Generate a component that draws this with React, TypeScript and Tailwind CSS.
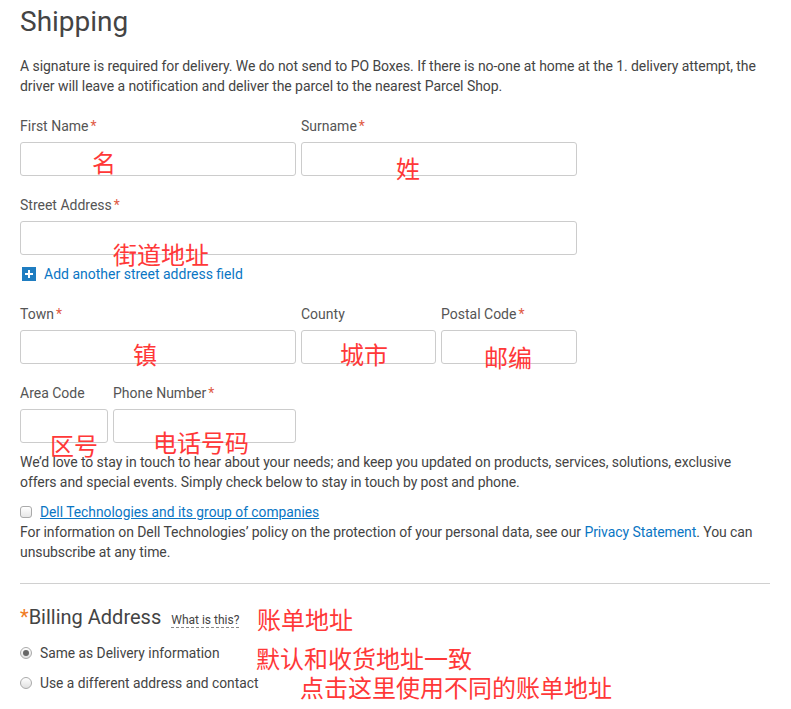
import React from "react";

const Req = () => <span className="text-[#e05a44] ml-[2px]">*</span>;

function Field({ label, req, w }: { label: string; req?: boolean; w: string }) {
  return (
    <div className={`flex flex-col ${w}`}>
      <div className="h-5 leading-5 text-[14px] text-[#555] whitespace-nowrap">
        {label}
        {req && <Req />}
      </div>
      <div className="mt-[6px] h-[34px] w-full rounded-[3px] border border-[#cccccc] bg-white" />
    </div>
  );
}

const Note = ({ x, y, children }: { x: number; y: number; children: React.ReactNode }) => (
  <div
    className="absolute whitespace-nowrap text-[24px] leading-none text-[#ff3838]"
    style={{ left: x, top: y, fontFamily: '"Noto Sans CJK SC", sans-serif' }}
  >
    {children}
  </div>
);

export default function App() {
  return (
    <div
      className="relative w-[791px] h-[709px] overflow-hidden bg-white text-[#444]"
      style={{ fontFamily: "Roboto, 'Noto Sans CJK SC', sans-serif" }}
    >
      <div className="px-5">
        <h1 className="text-[28px] leading-[35px] pt-[4px] text-[#444] font-normal">Shipping</h1>
        <p className="mt-[18px] text-[14px] leading-[19.5px] tracking-[-0.06px] text-[#444] w-[750px]">
          A signature is required for delivery. We do not send to PO Boxes. If there is no-one at home at the 1. delivery attempt, the driver will leave a notification and deliver the parcel to the nearest Parcel Shop.
        </p>

        <div className="mt-[20px] flex gap-[5px]">
          <Field label="First Name" req w="w-[276px]" />
          <Field label="Surname" req w="w-[276px]" />
        </div>

        <div className="mt-[19px] flex">
          <Field label="Street Address" req w="w-[557px]" />
        </div>

        <div className="mt-[9px] flex items-center h-5 gap-[8px] text-[14px] text-[#0a76c4]">
          <svg width="14" height="14" viewBox="0 0 14 14" className="ml-[2px]">
            <rect width="14" height="14" fill="#1f7dc1" />
            <path d="M7 3v8M3 7h8" stroke="white" strokeWidth="2" />
          </svg>
          <span>Add another street address field</span>
        </div>

        <div className="mt-[20px] flex gap-[5px]">
          <Field label="Town" req w="w-[276px]" />
          <Field label="County" w="w-[135px]" />
          <Field label="Postal Code" req w="w-[136px]" />
        </div>

        <div className="mt-[19px] flex gap-[5px]">
          <Field label="Area Code" w="w-[88px]" />
          <Field label="Phone Number" req w="w-[183px]" />
        </div>

        <p className="mt-[10px] text-[14px] leading-[19.5px] tracking-[-0.08px] text-[#444] w-[750px]">
          We’d love to stay in touch to hear about your needs; and keep you updated on products, services, solutions, exclusive offers and special events. Simply check below to stay in touch by post and phone.
        </p>

        <div className="mt-[10px] flex items-center h-5 gap-[8px] text-[13.8px]">
          <span className="inline-block w-[12px] h-[12px] rounded-[3px] border border-[#aaa] bg-gradient-to-b from-white to-[#e6e6e6]" />
          <a className="text-[#0a76c4] underline">Dell Technologies and its group of companies</a>
        </div>

        <p className="text-[14px] leading-[20px] tracking-[-0.08px] text-[#444] w-[750px]">
          For information on Dell Technologies’ policy on the protection of your personal data, see our{" "}
          <span className="text-[#0a76c4]">Privacy Statement</span>. You can unsubscribe at any time.
        </p>

        <div className="mt-[21px] h-px w-[750px] bg-[#d0d0d0]" />

        <div className="mt-[18px] flex items-baseline h-[28px]">
          <span className="text-[#f07c22] text-[20px]">*</span>
          <span className="text-[20px] text-[#444]">Billing Address</span>
          <span className="ml-[10px] text-[12px] text-[#444] border-b border-dashed border-[#888] leading-[14px]">What is this?</span>
        </div>

        <div className="mt-[13px] flex items-center h-5 gap-[8px] text-[13.8px] text-[#444]">
          <span className="relative inline-flex items-center justify-center w-[12px] h-[12px] rounded-full border border-[#aaa] bg-gradient-to-b from-white to-[#e0e0e0]">
            <span className="w-[6px] h-[6px] rounded-full bg-[#666]" />
          </span>
          <span>Same as Delivery information</span>
        </div>
        <div className="mt-[10px] flex items-center h-5 gap-[8px] text-[13.8px] text-[#444]">
          <span className="inline-block w-[12px] h-[12px] rounded-full border border-[#aaa] bg-gradient-to-b from-white to-[#e0e0e0]" />
          <span>Use a different address and contact</span>
        </div>
      </div>

      <Note x={92} y={150}>名</Note>
      <Note x={396} y={156}>姓</Note>
      <Note x={113} y={242}>街道地址</Note>
      <Note x={133} y={342}>镇</Note>
      <Note x={340} y={342}>城市</Note>
      <Note x={484} y={345}>邮编</Note>
      <Note x={50} y={433}>区号</Note>
      <Note x={153} y={430}>电话号码</Note>
      <Note x={257} y={607}>账单地址</Note>
      <Note x={256} y={646}>默认和收货地址一致</Note>
      <Note x={300} y={675}>点击这里使用不同的账单地址</Note>
    </div>
  );
}
